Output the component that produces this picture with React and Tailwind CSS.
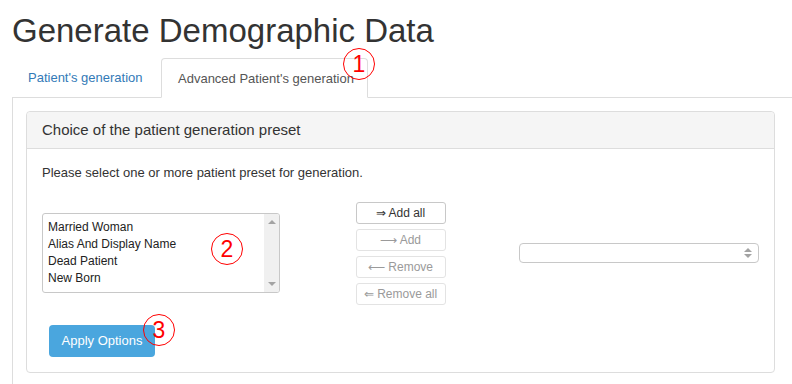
import React from "react";

const presets = ["Married Woman", "Alias And Display Name", "Dead Patient", "New Born"];

function Mark({ n, className }) {
  return (
    <div
      className={`absolute w-[32px] h-[32px] rounded-full border border-[#ff0000] flex items-center justify-center text-[#ff0000] text-[23px] leading-none pointer-events-none ${className}`}
    >
      {n}
    </div>
  );
}

function MoveButton({ label, active }) {
  return (
    <button
      className={`h-[22px] w-[90px] rounded-[3px] border bg-white text-[12px] leading-none ${
        active ? "border-[#c8c8c8] text-[#333]" : "border-[#e3e3e3] text-[#9a9a9a]"
      }`}
    >
      {label}
    </button>
  );
}

export default function App() {
  return (
    <div className="relative w-[792px] h-[384px] overflow-hidden bg-white pl-3 font-['Liberation_Sans',Arial,sans-serif] text-[13px] text-[#333]">
      <h1 className="pt-[13px] text-[33px] leading-[1.1] font-normal">Generate Demographic Data</h1>

      <div className="mt-[9px] flex items-end border-b border-[#ddd]">
        <div className="h-[39px] w-[147px] mr-[2px] flex items-center pl-4 text-[#337ab7]">Patient's generation</div>
        <div className="h-[40px] -mb-px w-[207px] flex items-center pl-4 rounded-t-[4px] border border-[#ddd] border-b-white bg-white text-[#555]">
          Advanced Patient's generation
        </div>
      </div>

      <div className="border-l border-[#ddd] pl-[13px] pt-[13px] h-[300px]">
        <div className="w-[749px] rounded-[4px] border border-[#ddd]">
          <div className="h-[37px] flex items-center px-[15px] bg-[#f5f5f5] border-b border-[#ddd] rounded-t-[4px] text-[15px]">
            Choice of the patient generation preset
          </div>
          <div className="px-[15px] pt-[15px] pb-[15px]">
            <p className="leading-[18.5px]">Please select one or more patient preset for generation.</p>

            <div className="mt-[19px] grid grid-cols-3 items-center">
              <div className="w-[238px] h-[80px] flex rounded-[3px] border border-[#c8c8c8] overflow-hidden">
                <div className="flex-1 pl-[5px] pt-[5px] text-[12px] leading-[17px] text-[#222]">
                  {presets.map((p) => (
                    <div key={p}>{p}</div>
                  ))}
                </div>
                <div className="w-[15px] bg-[#f0f0f0] flex flex-col items-center justify-between py-[6px]">
                  <div className="w-0 h-0 border-x-[4px] border-x-transparent border-b-[4px] border-b-[#a3a3a3]" />
                  <div className="w-0 h-0 border-x-[4px] border-x-transparent border-t-[4px] border-t-[#a3a3a3]" />
                </div>
              </div>

              <div className="flex flex-col items-center gap-[5px]">
                <MoveButton label="⇒ Add all" active />
                <MoveButton label="⟶ Add" />
                <MoveButton label="⟵ Remove" />
                <MoveButton label="⇐ Remove all" />
              </div>

              <div className="-ml-px h-[20px] rounded-[4px] border border-[#c8c8c8] flex justify-end items-center pr-[6px]">
                <div className="flex flex-col gap-[2px]">
                  <div className="w-0 h-0 border-x-[4px] border-x-transparent border-b-[4px] border-b-[#a3a3a3]" />
                  <div className="w-0 h-0 border-x-[4px] border-x-transparent border-t-[4px] border-t-[#a3a3a3]" />
                </div>
              </div>
            </div>

            <button className="mt-[20px] ml-[7px] h-[32px] w-[106px] rounded-[4px] bg-[#4aa6de] text-white text-[13px]">
              Apply Options
            </button>
          </div>
        </div>
      </div>

      <Mark n="1" className="left-[343px] top-[48px]" />
      <Mark n="2" className="left-[211px] top-[233px]" />
      <Mark n="3" className="left-[143px] top-[314px]" />
    </div>
  );
}
